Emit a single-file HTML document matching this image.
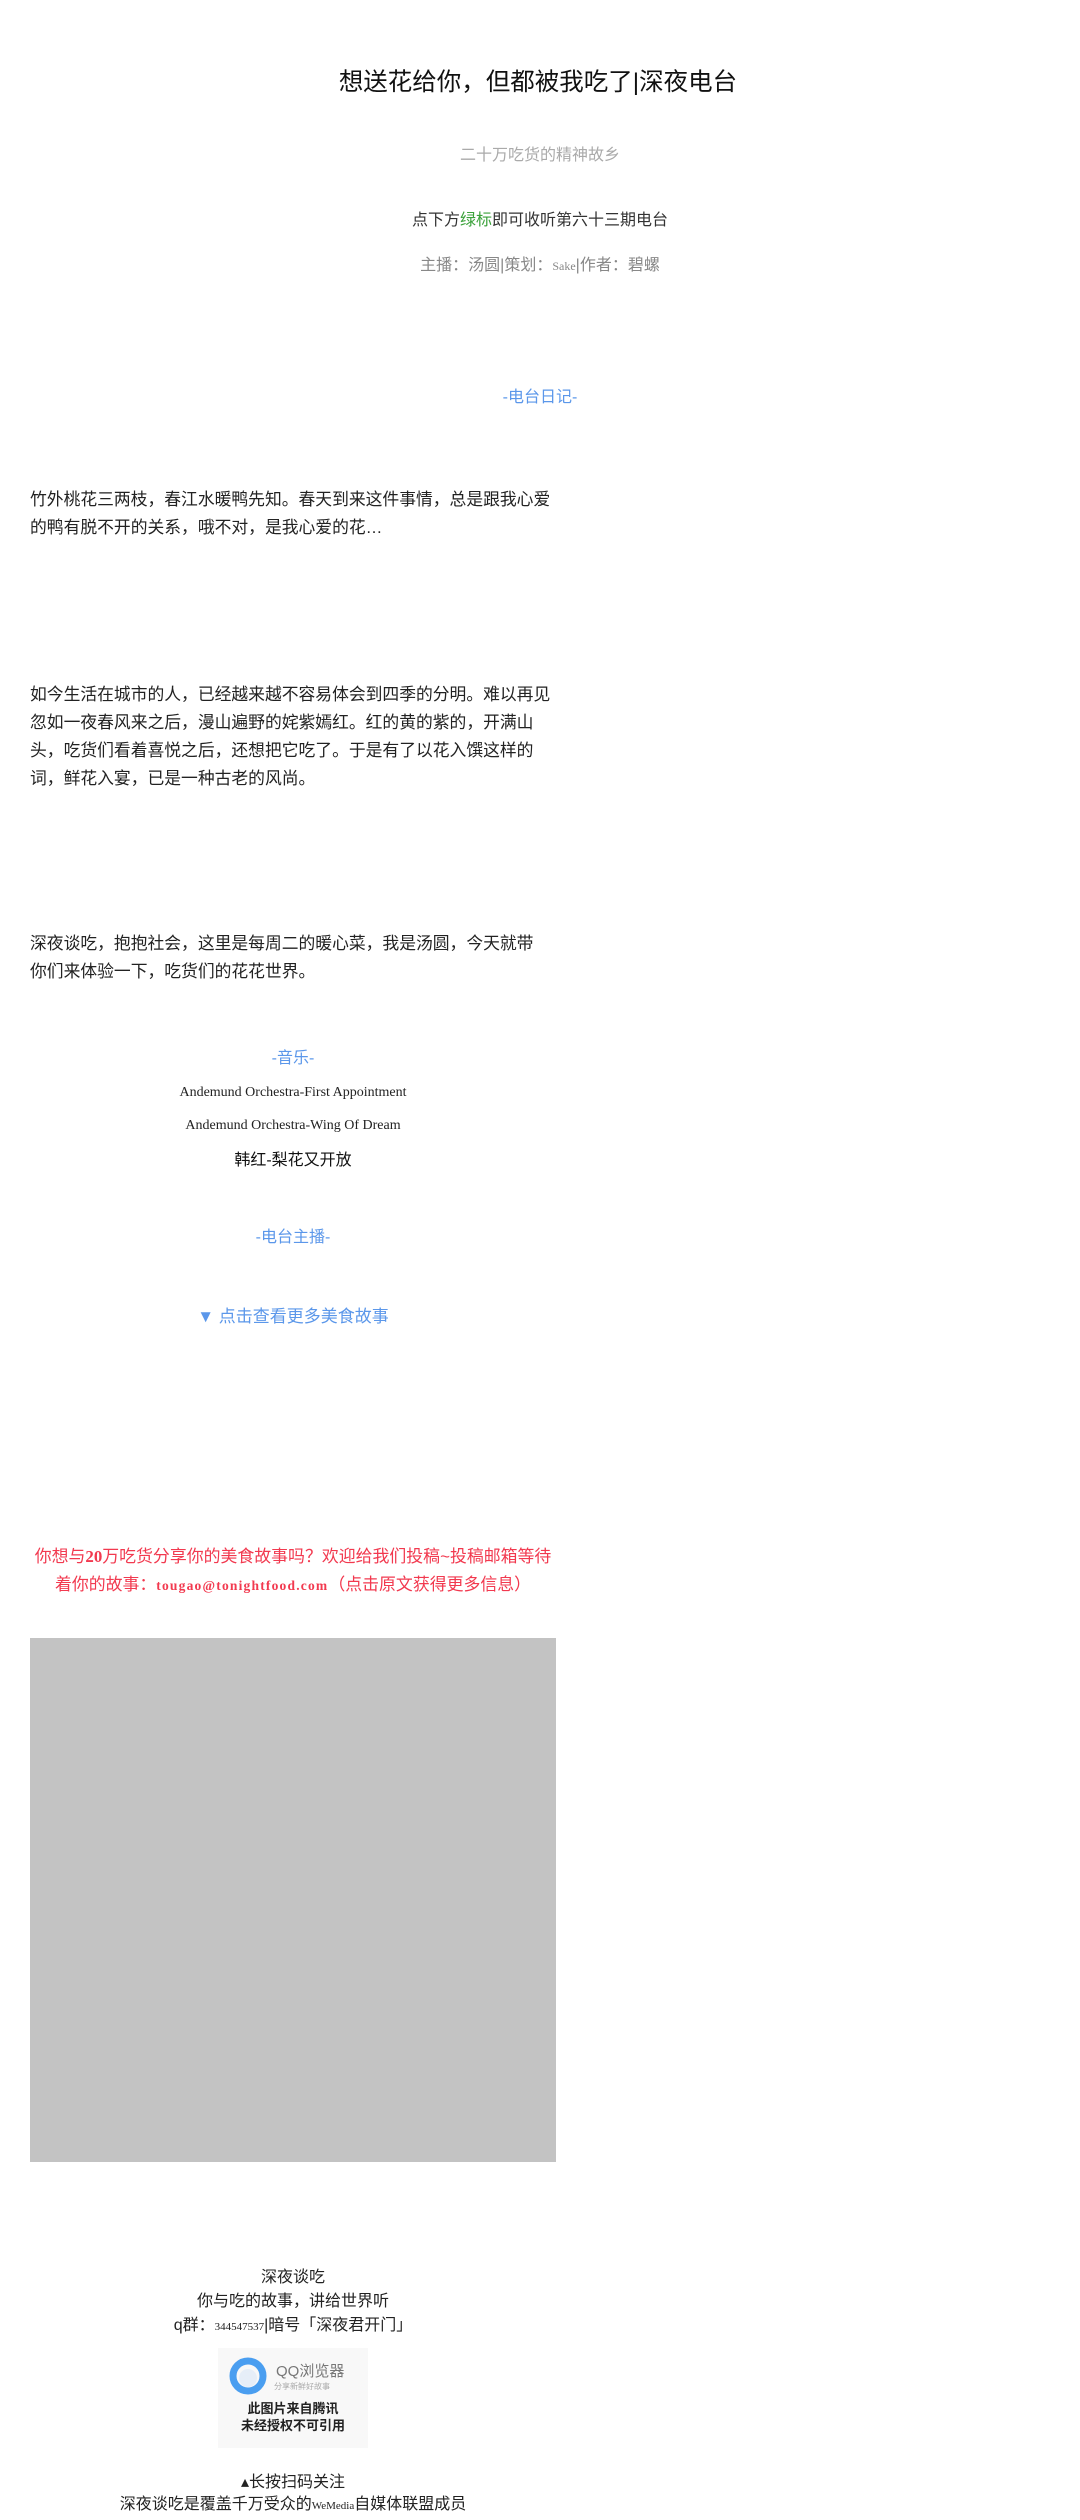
<!DOCTYPE html>
<html><head><meta charset="utf-8"><style>
html,body{margin:0;padding:0;background:#fff;}
body{width:1080px;height:2520px;position:relative;overflow:hidden;font-family:"Liberation Sans","Noto Sans CJK SC",sans-serif;}
.a{position:absolute;white-space:nowrap;}
.c{position:absolute;left:0;width:1080px;text-align:center;white-space:nowrap;}
.m{position:absolute;left:30px;width:526px;text-align:center;white-space:nowrap;}
.p{position:absolute;left:30px;width:526px;font-size:16.8px;line-height:28px;color:#222;}
.blue{color:#5b97ea;}
</style></head><body>
<div class="c" style="top:67px;font-size:24.5px;line-height:32px;color:#111;left:-2px;">想送花给你，但都被我吃了|深夜电台</div>
<div class="c" style="top:145px;font-size:16px;line-height:22px;color:#aaa;left:0px;">二十万吃货的精神故乡</div>
<div class="c" style="top:210px;font-size:16px;line-height:22px;color:#333;left:0px;">点下方<span style="color:#3aa13a">绿标</span>即可收听第六十三期电台</div>
<div class="c" style="top:255px;font-size:16px;line-height:22px;color:#888;left:0px;">主播：汤圆|策划：<span style="font-family:'Liberation Serif',serif;font-size:12px">Sake</span>|作者：碧螺</div>
<div class="c blue" style="top:387px;font-size:16px;line-height:22px;left:0px;">-电台日记-</div>

<div class="p" style="top:486px;">竹外桃花三两枝，春江水暖鸭先知。春天到来这件事情，总是跟我心爱的鸭有脱不开的关系，哦不对，是我心爱的花…</div>
<div class="p" style="top:681px;">如今生活在城市的人，已经越来越不容易体会到四季的分明。难以再见忽如一夜春风来之后，漫山遍野的姹紫嫣红。红的黄的紫的，开满山头，吃货们看着喜悦之后，还想把它吃了。于是有了以花入馔这样的词，鲜花入宴，已是一种古老的风尚。</div>
<div class="p" style="top:930px;">深夜谈吃，抱抱社会，这里是每周二的暖心菜，我是汤圆，今天就带<br>你们来体验一下，吃货们的花花世界。</div>

<div class="m blue" style="top:1048px;font-size:16px;line-height:22px;">-音乐-</div>
<div class="m" style="top:1084px;font-family:'Liberation Serif',serif;font-size:14px;line-height:18px;color:#222;">Andemund Orchestra-First Appointment</div>
<div class="m" style="top:1117px;font-family:'Liberation Serif',serif;font-size:14px;line-height:18px;color:#222;">Andemund Orchestra-Wing Of Dream</div>
<div class="m" style="top:1150px;font-size:16px;line-height:22px;color:#111;">韩红-梨花又开放</div>
<div class="m blue" style="top:1227px;font-size:16px;line-height:22px;">-电台主播-</div>
<div class="m blue" style="top:1305px;font-size:17px;line-height:24px;">▼ 点击查看更多美食故事</div>

<div class="m" style="top:1543px;font-size:16.9px;line-height:28px;color:#f2394f;white-space:nowrap;">你想与<b style="font-family:'Liberation Serif',serif">20</b>万吃货分享你的美食故事吗？欢迎给我们投稿~投稿邮箱等待<br>着你的故事：<b style="font-family:'Liberation Serif',serif;font-size:13.5px;letter-spacing:1.2px">tougao@tonightfood.com</b>（点击原文获得更多信息）</div>

<div class="a" style="left:30px;top:1638px;width:526px;height:524px;background:#c3c3c3;"></div>

<div class="m" style="top:2267px;font-size:16px;line-height:22px;color:#222;">深夜谈吃</div>
<div class="m" style="top:2291px;font-size:16px;line-height:22px;color:#222;">你与吃的故事，讲给世界听</div>
<div class="m" style="top:2315px;font-size:16px;line-height:22px;color:#222;">q群：<span style="font-family:'Liberation Serif',serif;font-size:11px">344547537</span>|暗号「深夜君开门」</div>

<div class="a" style="left:218px;top:2348px;width:150px;height:100px;background:#f8f8f8;">
  <svg width="150" height="100" style="position:absolute;left:0;top:0">
    <circle cx="30" cy="28" r="15" fill="none" stroke="#4a9ef0" stroke-width="7"/>
    <circle cx="30" cy="30" r="9" fill="#e6eef8"/>
  </svg>
  <div class="a" style="left:58px;top:12px;font-size:15px;color:#777;">QQ浏览器</div>
  <div class="a" style="left:56px;top:33px;font-size:8px;color:#aaa;">分享新鲜好故事</div>
  <div class="a" style="left:0;width:150px;text-align:center;top:52px;font-size:13px;line-height:17px;color:#222;font-weight:bold;">此图片来自腾讯<br>未经授权不可引用</div>
</div>

<div class="m" style="top:2472px;font-size:16px;line-height:22px;color:#222;">▴长按扫码关注</div>
<div class="m" style="top:2494px;font-size:16px;line-height:22px;color:#222;">深夜谈吃是覆盖千万受众的<span style="font-family:'Liberation Serif',serif;font-size:11px">WeMedia</span>自媒体联盟成员</div>
</body></html>
